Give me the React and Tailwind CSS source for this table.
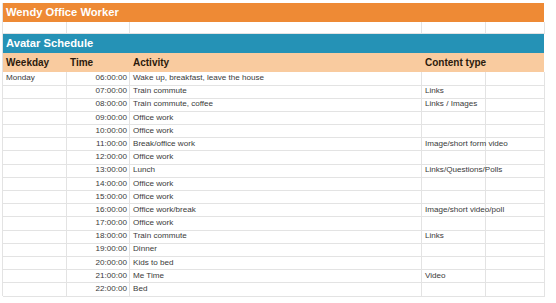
const rows = [
  ["Monday", "06:00:00", "Wake up, breakfast, leave the house", ""],
  ["", "07:00:00", "Train commute", "Links"],
  ["", "08:00:00", "Train commute, coffee", "Links / Images"],
  ["", "09:00:00", "Office work", ""],
  ["", "10:00:00", "Office work", ""],
  ["", "11:00:00", "Break/office work", "Image/short form video"],
  ["", "12:00:00", "Office work", ""],
  ["", "13:00:00", "Lunch", "Links/Questions/Polls"],
  ["", "14:00:00", "Office work", ""],
  ["", "15:00:00", "Office work", ""],
  ["", "16:00:00", "Office work/break", "Image/short video/poll"],
  ["", "17:00:00", "Office work", ""],
  ["", "18:00:00", "Train commute", "Links"],
  ["", "19:00:00", "Dinner", ""],
  ["", "20:00:00", "Kids to bed", ""],
  ["", "21:00:00", "Me Time", "Video"],
  ["", "22:00:00", "Bed", ""],
];

const cols = "grid grid-cols-[64px_63px_292px_64px_59px]";

function Cell({ children, className = "" }) {
  return (
    <div className={"border-r border-b border-[#e3e3e3] whitespace-nowrap " + className}>
      {children}
    </div>
  );
}

export default function App() {
  return (
    <div className="w-[556px] h-[303px] bg-white overflow-hidden pt-[3px] pl-[2px] font-['Liberation_Sans',Arial,sans-serif]">
      <div className="w-[542px] border-l border-[#e3e3e3]">
        <div className="h-[19px] bg-[#ee8a35] flex items-center px-[3px] text-white font-bold text-[11.2px]">
          Wendy Office Worker
        </div>
        <div className={cols + " h-[12px]"}>
          <Cell />
          <Cell />
          <Cell />
          <Cell />
          <Cell />
        </div>
        <div className="h-[19px] bg-[#2592b6] flex items-center px-[3px] text-white font-bold text-[11.2px]">
          Avatar Schedule
        </div>
        <div className={cols + " h-[19px] bg-[#f9cb9f] text-[#2b1a0c] font-bold text-[10px] whitespace-nowrap"}>
          <div className="flex items-center pl-[3px]">Weekday</div>
          <div className="flex items-center pl-[3px]">Time</div>
          <div className="flex items-center pl-[3px]">Activity</div>
          <div className="flex items-center pl-[3px]">Content type</div>
          <div />
        </div>
        {rows.map((r, i) => (
          <div key={i} className={cols + " h-[13.2px] text-[8.1px] text-[#3a3a3a] leading-[12.5px]"}>
            <Cell className="pl-[3px]">{r[0]}</Cell>
            <Cell className="text-right pr-[2px]">{r[1]}</Cell>
            <Cell className="pl-[3px]">{r[2]}</Cell>
            <Cell className="pl-[3px]">{r[3]}</Cell>
            <Cell />
          </div>
        ))}
      </div>
    </div>
  );
}
